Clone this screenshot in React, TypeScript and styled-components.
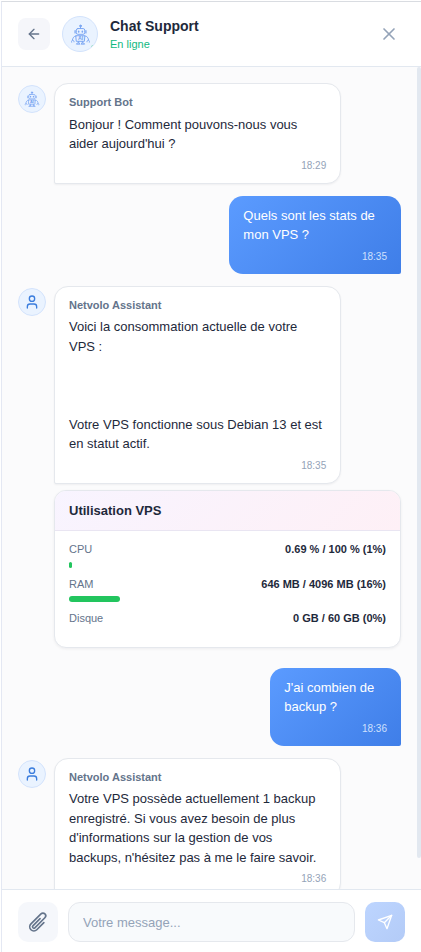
import React, { useEffect, useRef, useState } from "react";
import styled, { createGlobalStyle, css } from "styled-components";
import { ArrowLeft, User, X } from "lucide-react";

const GlobalStyle = createGlobalStyle`
  *, *::before, *::after { box-sizing: border-box; }
  body { margin: 0; background: #ffffff; }
  body, button, input {
    font-family: "Liberation Sans", Arial, Helvetica, sans-serif;
  }
`;

const Frame = styled.div`
  height: 100vh;
  padding: 1px 0 0 1px;
  background: #ffffff;
`;

const Panel = styled.section`
  display: flex;
  flex-direction: column;
  height: 100%;
  border-top: 1px solid #d9dce1;
  border-left: 1px solid #e4e8f3;
  color: #1e293b;
  font-size: 13px;
  line-height: 1.5;
`;

const Header = styled.header`
  display: flex;
  align-items: center;
  flex: none;
  gap: 12px;
  height: 65px;
  padding: 0 16px;
  border-bottom: 1px solid #e2e8f0;
  background: #ffffff;
`;

const IconButton = styled.button<{ $filled?: boolean }>`
  display: flex;
  align-items: center;
  justify-content: center;
  flex: none;
  width: 32px;
  height: 32px;
  padding: 0;
  border: 0;
  border-radius: 8px;
  background: ${(p) => (p.$filled ? "#f5f6fa" : "transparent")};
  color: ${(p) => (p.$filled ? "#64748b" : "#94a3b8")};
  cursor: pointer;
`;

const Avatar = styled.div<{ $large?: boolean }>`
  position: relative;
  display: flex;
  align-items: center;
  justify-content: center;
  flex: none;
  width: ${(p) => (p.$large ? 36 : 28)}px;
  height: ${(p) => (p.$large ? 36 : 28)}px;
  margin-top: ${(p) => (p.$large ? 0 : 2)}px;
  border: 1px solid #d3e3fc;
  border-radius: 50%;
  overflow: hidden;
  background: #eaf3ff;
  color: #3b7ddd;
`;

const OnlineDot = styled.span`
  position: absolute;
  right: 0;
  bottom: 0;
  width: 6px;
  height: 6px;
  border-radius: 50%;
  background: #22c55e;
`;

const HeaderText = styled.div`
  flex: 1;
  min-width: 0;
`;

const Title = styled.h1`
  margin: 0;
  font-size: 14px;
  line-height: 20px;
  font-weight: 700;
`;

const Status = styled.p`
  margin: 0;
  color: #10b981;
  font-size: 11px;
  line-height: 16px;
`;

const Body = styled.main`
  display: flex;
  flex: 1;
  min-height: 0;
  background: #fbfbfc;
`;

const Messages = styled.div`
  display: flex;
  flex: 1;
  flex-direction: column;
  gap: 12px;
  min-width: 0;
  overflow-y: auto;
  padding: 16px 16px 24px;
  scrollbar-width: none;

  & > * { flex: none; }
`;

const Rail = styled.div`
  flex: none;
  width: 4px;
`;

const Thumb = styled.div`
  border-radius: 2px;
  background: #e2e8f0;
`;

const Row = styled.article<{ $own?: boolean }>`
  display: flex;
  align-items: flex-start;
  align-self: ${(p) => (p.$own ? "flex-end" : "stretch")};
  justify-content: ${(p) => (p.$own ? "flex-end" : "flex-start")};
  gap: 8px;
`;

const ownBubble = css`
  border-radius: 14px 14px 2px 14px;
  background: linear-gradient(135deg, #5b9bff, #3f7ee8);
  color: #ffffff;
`;

const botBubble = css`
  border: 1px solid #e5e8ed;
  border-radius: 14px 14px 14px 2px;
  background: #ffffff;
  box-shadow: 0 1px 2px rgba(15, 23, 42, 0.05);
`;

const Bubble = styled.div<{ $own?: boolean }>`
  max-width: 75%;
  padding: 10px 14px;
  ${(p) => (p.$own ? ownBubble : botBubble)}
`;

const Author = styled.div`
  margin-bottom: 4px;
  color: #64748b;
  font-size: 11px;
  font-weight: 700;
`;

const Text = styled.p`
  margin: 0;
  white-space: pre-line;
`;

const Time = styled.time<{ $own?: boolean }>`
  display: block;
  margin-top: 4px;
  color: ${(p) => (p.$own ? "#cfe0fd" : "#94a3b8")};
  font-size: 10px;
  text-align: right;
`;

const Group = styled.div`
  display: flex;
  flex-direction: column;
  gap: 6px;
  margin-bottom: 8px;
`;

const Card = styled.section`
  margin-left: 36px;
  border: 1px solid #e5e8ed;
  border-radius: 12px;
  overflow: hidden;
  background: #ffffff;
  box-shadow: 0 1px 3px rgba(15, 23, 42, 0.06);
`;

const CardTitle = styled.h2`
  margin: 0;
  padding: 10px 14px;
  border-bottom: 1px solid #e9e5f2;
  background: linear-gradient(135deg, #f8f4ff, #fef0f6);
  font-size: 13px;
  font-weight: 700;
`;

const Metrics = styled.div`
  display: flex;
  flex-direction: column;
  gap: 8px;
  padding: 10px 14px;
`;

const MetricHead = styled.div`
  display: flex;
  justify-content: space-between;
  margin-bottom: 4px;
  color: #64748b;
  font-size: 11px;
`;

const MetricValue = styled.strong`
  color: #1e293b;
`;

const Track = styled.div`
  height: 6px;
`;

const Fill = styled.div`
  height: 100%;
  border-radius: 3px;
  background: #22c55e;
`;

const Composer = styled.form`
  display: flex;
  flex: none;
  gap: 10px;
  padding: 12px 16px 10px;
  border-top: 1px solid #e2e8f0;
  background: #ffffff;
`;

const ComposerButton = styled.button<{ $send?: boolean }>`
  display: flex;
  align-items: center;
  justify-content: center;
  flex: none;
  width: 40px;
  height: 40px;
  padding: 0;
  border: 0;
  border-radius: 10px;
  background: ${(p) =>
    p.$send ? "linear-gradient(135deg, #bdd5ff, #b3cbf7)" : "#f5f7fb"};
  color: ${(p) => (p.$send ? "#ffffff" : "#64748b")};
`;

const MessageInput = styled.input`
  flex: 1;
  min-width: 0;
  height: 40px;
  padding: 0 14px;
  border: 1px solid #e5e8ed;
  border-radius: 12px;
  outline: 0;
  background: #f8fafc;
  color: #1e293b;
  font-size: 13px;

  &::placeholder { color: #94a3b8; opacity: 1; }
`;

const RobotLabel = styled.text`
  font: 700 6px "Liberation Sans", Arial, sans-serif;
  fill: #6f9eee;
  stroke: none;
`;

function Robot({ size }: { size: number }) {
  return (
    <svg width={size} height={size} viewBox="0 0 24 24" fill="none" stroke="#7aa6f2" strokeWidth="1.1" strokeLinecap="round" strokeLinejoin="round" aria-hidden="true">
      <circle cx="12" cy="2.2" r="1" fill="#7aa6f2" />
      <path d="M12 3.2v2" />
      <path d="M5.8 7.6v2.6M18.2 7.6v2.6" strokeWidth="1.4" />
      <rect x="7.2" y="5.2" width="9.6" height="6.6" rx="1.8" />
      <path d="M9.9 8.2v.8M14.1 8.2v.8" strokeWidth="1.8" />
      <path d="M7 13.4h10l-.6 6.4H7.6z" />
      <path d="M7 13.6C4.2 13.8 3.2 16 2.8 18.2M17 13.6c2.8.2 3.8 2.4 4.2 4.6" />
      <path d="M1.8 20.8c-.9-2.6 3-3.4 2.8-.4M19.4 20.4c-.2-3 3.7-2.2 2.8.4" />
      <RobotLabel x="12" y="18.7" textAnchor="middle">AI</RobotLabel>
      <path d="M10 19.8v1.6M14 19.8v1.6M7.4 22.6c.4-1.6 3.4-1.6 3.8 0zM12.8 22.6c.4-1.6 3.4-1.6 3.8 0z" />
    </svg>
  );
}

const strokeIcon = {
  viewBox: "0 0 24 24",
  fill: "none",
  stroke: "currentColor",
  strokeLinecap: "round",
  strokeLinejoin: "round",
  "aria-hidden": true,
} as const;

function ClipIcon() {
  return (
    <svg width="22" height="22" strokeWidth="1.8" {...strokeIcon}>
      <path d="m18.375 12.739-7.693 7.693a4.5 4.5 0 0 1-6.364-6.364l10.94-10.94A3 3 0 1 1 19.5 7.372L8.552 18.32m.009-.01-.01.01m5.699-9.941-7.81 7.81a1.5 1.5 0 0 0 2.112 2.13" />
    </svg>
  );
}

function SendIcon() {
  return (
    <svg width="16" height="16" strokeWidth="2" {...strokeIcon}>
      <path d="m22 2-7 20-4-9-9-4Z" />
      <path d="M22 2 11 13" />
    </svg>
  );
}

type MessageProps = {
  author?: string;
  time: string;
  own?: boolean;
  robot?: boolean;
  children: React.ReactNode;
};

function Message({ author, time, own, robot, children }: MessageProps) {
  return (
    <Row $own={own}>
      {!own && (
        <Avatar>{robot ? <Robot size={16} /> : <User size={16} aria-hidden="true" />}</Avatar>
      )}
      <Bubble $own={own}>
        {author && <Author>{author}</Author>}
        <Text>{children}</Text>
        <Time $own={own}>{time}</Time>
      </Bubble>
    </Row>
  );
}

function ScrollArea({ children }: { children: React.ReactNode }) {
  const list = useRef<HTMLDivElement>(null);
  const [thumb, setThumb] = useState({ height: 0, top: 0 });

  const measure = () => {
    const el = list.current;
    if (!el) return;
    const ratio = el.clientHeight / el.scrollHeight;
    setThumb({
      height: ratio < 1 ? Math.round(el.clientHeight * ratio) : 0,
      top: Math.round(el.scrollTop * ratio),
    });
  };

  useEffect(() => {
    measure();
    window.addEventListener("resize", measure);
    return () => window.removeEventListener("resize", measure);
  }, []);

  return (
    <Body>
      <Messages ref={list} onScroll={measure}>
        {children}
      </Messages>
      <Rail aria-hidden="true">
        <Thumb style={{ height: thumb.height, transform: `translateY(${thumb.top}px)` }} />
      </Rail>
    </Body>
  );
}

const metrics = [
  { label: "CPU", value: "0.69 % / 100 % (1%)", percent: 1 },
  { label: "RAM", value: "646 MB / 4096 MB (16%)", percent: 16 },
  { label: "Disque", value: "0 GB / 60 GB (0%)", percent: 0 },
];

export default function App() {
  return (
    <Frame>
      <GlobalStyle />
      <Panel>
        <Header>
          <IconButton $filled type="button" aria-label="Retour">
            <ArrowLeft size={16} />
          </IconButton>
          <Avatar $large>
            <Robot size={21} />
            <OnlineDot />
          </Avatar>
          <HeaderText>
            <Title>Chat Support</Title>
            <Status>En ligne</Status>
          </HeaderText>
          <IconButton type="button" aria-label="Fermer">
            <X size={20} />
          </IconButton>
        </Header>
        <ScrollArea>
          <Message author="Support Bot" time="18:29" robot>
            Bonjour ! Comment pouvons-nous vous aider aujourd'hui ?
          </Message>
          <Message own time="18:35">
            Quels sont les stats de mon VPS ?
          </Message>
          <Group>
            <Message author="Netvolo Assistant" time="18:35">
              {"Voici la consommation actuelle de votre VPS :\n\n\n\nVotre VPS fonctionne sous Debian 13 et est en statut actif."}
            </Message>
            <Card>
              <CardTitle>Utilisation VPS</CardTitle>
              <Metrics>
                {metrics.map((m) => (
                  <div key={m.label}>
                    <MetricHead>
                      <span>{m.label}</span>
                      <MetricValue>{m.value}</MetricValue>
                    </MetricHead>
                    <Track>
                      <Fill style={{ width: `${m.percent}%` }} />
                    </Track>
                  </div>
                ))}
              </Metrics>
            </Card>
          </Group>
          <Message own time="18:36">
            J'ai combien de backup ?
          </Message>
          <Message author="Netvolo Assistant" time="18:36">
            Votre VPS possède actuellement 1 backup enregistré. Si vous avez besoin de plus
            d'informations sur la gestion de vos backups, n'hésitez pas à me le faire savoir.
          </Message>
        </ScrollArea>
        <Composer onSubmit={(e) => e.preventDefault()}>
          <ComposerButton type="button" aria-label="Joindre un fichier">
            <ClipIcon />
          </ComposerButton>
          <MessageInput aria-label="Votre message" placeholder="Votre message..." />
          <ComposerButton $send type="submit" disabled aria-label="Envoyer">
            <SendIcon />
          </ComposerButton>
        </Composer>
      </Panel>
    </Frame>
  );
}
